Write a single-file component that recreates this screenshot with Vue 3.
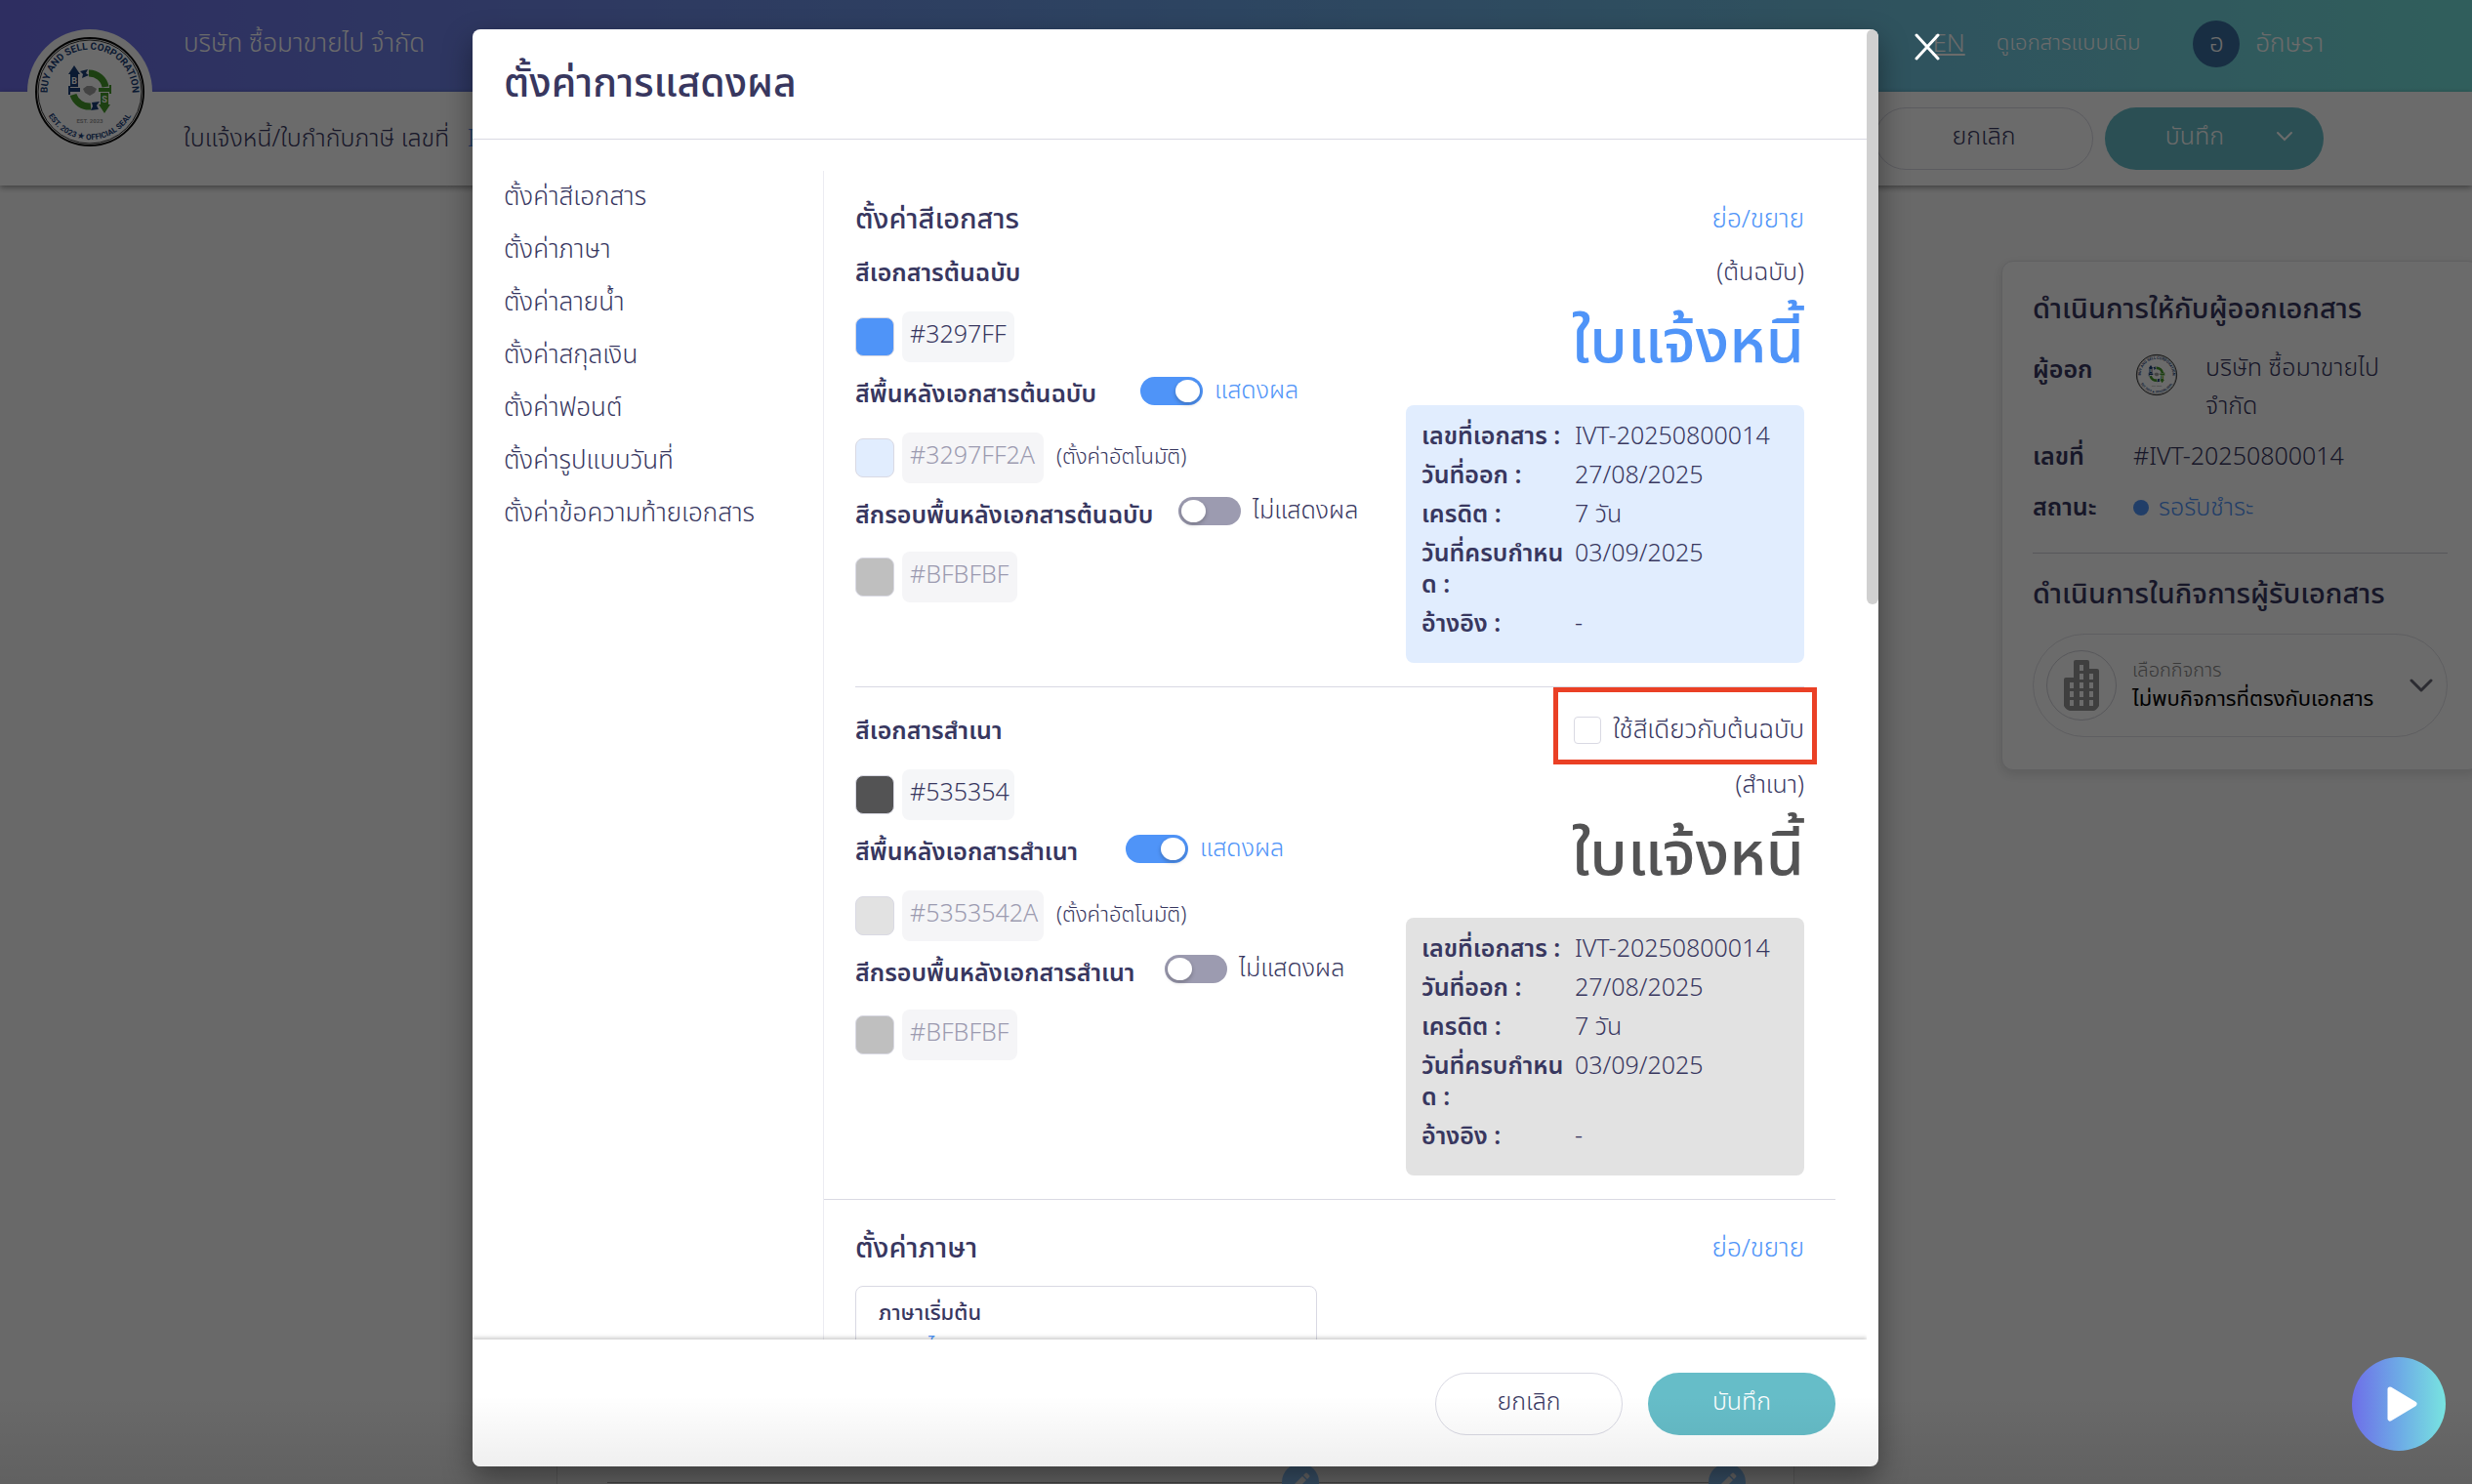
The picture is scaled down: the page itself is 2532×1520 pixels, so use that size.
<script setup>
import { ref } from 'vue'

const menu = [
  'ตั้งค่าสีเอกสาร',
  'ตั้งค่าภาษา',
  'ตั้งค่าลายน้ำ',
  'ตั้งค่าสกุลเงิน',
  'ตั้งค่าฟอนต์',
  'ตั้งค่ารูปแบบวันที่',
  'ตั้งค่าข้อความท้ายเอกสาร',
]

const groups = ref([
  {
    key: 'original',
    tag: '(ต้นฉบับ)',
    title: 'สีเอกสารต้นฉบับ',
    main: '#3297FF',
    ink: '#4f94f8',
    soft: '#e1edfe',
    bgTitle: 'สีพื้นหลังเอกสารต้นฉบับ',
    bg: '#3297FF2A',
    showBg: true,
    frameTitle: 'สีกรอบพื้นหลังเอกสารต้นฉบับ',
    frame: '#BFBFBF',
    showFrame: false,
  },
  {
    key: 'copy',
    tag: '(สำเนา)',
    title: 'สีเอกสารสำเนา',
    main: '#535354',
    ink: '#535354',
    soft: '#e2e2e2',
    bgTitle: 'สีพื้นหลังเอกสารสำเนา',
    bg: '#5353542A',
    showBg: true,
    frameTitle: 'สีกรอบพื้นหลังเอกสารสำเนา',
    frame: '#BFBFBF',
    showFrame: false,
  },
])

const sameColour = ref(false)
</script>

<template>
  <div class="app">
    <svg class="defs" aria-hidden="true">
      <symbol id="seal" viewBox="0 0 128 128">
        <circle cx="64" cy="64" r="64" fill="#fff" />
        <circle cx="64" cy="64" r="55" fill="none" stroke="#0a0a0a" stroke-width="2" />
        <circle cx="64" cy="64" r="53" fill="none" stroke="#333" stroke-width="1" />
        <path id="arcTop" d="M21 70 A43.4 43.4 0 1 1 107 70" fill="none" />
        <path id="arcBottom" d="M15 64 A49 49 0 0 0 113 64" fill="none" />
        <text class="seal-text" font-size="10" text-anchor="middle"><textPath href="#arcTop" startOffset="50%">BUY AND SELL CORPORATION</textPath></text>
        <text class="seal-text" font-size="8" text-anchor="middle"><textPath href="#arcBottom" startOffset="50%">EST. 2023 ★ OFFICIAL SEAL</textPath></text>
        <text class="seal-year" x="64" y="96" font-size="6" text-anchor="middle">EST. 2023</text>
        <path d="M63 45 A17 17 0 0 1 80 59" fill="none" stroke="#459a2c" stroke-width="7" />
        <path d="M47 67 A17 17 0 0 0 65 79" fill="none" stroke="#459a2c" stroke-width="7" />
        <path d="M48 37 L54 46 H52 V59 H44 V46 H42 Z" fill="#1c3f78" />
        <path d="M42 58 H44 V60 H54 V64 H44 V67 H42 Z" fill="#1c3f78" />
        <path d="M79 86 L73 77 H75 V65 H83 V77 H85 Z" fill="#459a2c" />
        <path d="M86 66 H84 V64 H73 V60 H84 V57 H86 Z" fill="#459a2c" />
        <path d="M54 43 L62 41 L60 45 L63 47 L56 50 L57 46 Z M66 75 L74 74 L71 78 L73 82 L65 83 L67 79 Z" fill="#1c3f78" />
        <path d="M57 61 L61 58 L66 58 L71 61 L69 65 L64 68 L59 65 Z" fill="#a0a0a0" />
        <text class="seal-mark" x="48" y="56" font-size="9" text-anchor="middle">B</text>
        <text class="seal-mark" x="79" y="75" font-size="9" text-anchor="middle">S</text>
      </symbol>
    </svg>

    <header class="topbar">
      <span class="company">บริษัท ซื้อมาขายไป จำกัด</span>
      <nav class="toplinks">
        <a href="#" class="lang">EN</a>
        <a href="#" class="classic">ดูเอกสารแบบเดิม</a>
        <span class="avatar">อ</span>
        <span>อักษรา</span>
      </nav>
    </header>
    <svg class="logo"><use href="#seal" /></svg>
    <div class="subbar">
      <span class="doc-title">ใบแจ้งหนี้/ใบกำกับภาษี เลขที่ <a href="#">IVT-20250800014</a></span>
      <div class="sub-actions">
        <button class="btn outline wide" type="button">ยกเลิก</button>
        <button class="btn teal wide split" type="button">
          <span>บันทึก</span>
          <svg width="20" height="12" viewBox="0 0 20 12" fill="none" stroke="currentColor" stroke-width="2" stroke-linecap="round"><path d="M3 2 L10 9 L17 2" /></svg>
        </button>
      </div>
    </div>

    <main class="page">
      <section class="sheet">
        <div class="sheet-row">
          <span v-for="n in 2" :key="n" class="edit">
            <svg width="38" height="38" viewBox="0 0 38 38"><circle cx="19" cy="19" r="19" fill="#8bc5ff" /><path d="M12 26 L13 21 L21 13 L25 17 L17 25 Z M22 12 L24 10 Q25 9 26 10 L28 12 Q29 13 28 14 L26 16 Z" fill="#fff" /></svg>
          </span>
        </div>
      </section>
      <aside class="side">
        <h2>ดำเนินการให้กับผู้ออกเอกสาร</h2>
        <dl>
          <dt>ผู้ออก</dt>
          <dd class="issuer"><svg class="mini"><use href="#seal" /></svg><span>บริษัท ซื้อมาขายไป<br>จำกัด</span></dd>
          <dt>เลขที่</dt>
          <dd>#IVT-20250800014</dd>
          <dt>สถานะ</dt>
          <dd class="status"><i></i>รอรับชำระ</dd>
        </dl>
        <h2 class="second">ดำเนินการในกิจการผู้รับเอกสาร</h2>
        <button class="picker" type="button">
          <span class="round">
            <svg width="38" height="54" viewBox="0 0 38 54"><path d="M11 3 Q11 1 13 1 H25 Q27 1 27 3 V10 H35 Q37 10 37 12 V48 Q34 53 31 53 H7 Q3 52 1 48 V21 Q1 19 3 19 H11 Z" fill="#969696" /><path d="M17 6h4v6h-4z M17 15h4v6h-4z M17 24h4v6h-4z M17 33h4v6h-4z M17 42h4v6h-4z M27 15h4v6h-4z M27 24h4v6h-4z M27 33h4v6h-4z M27 42h4v6h-4z M7 24h4v6H7z M7 33h4v6H7z M7 42h4v6H7z" fill="#fff" /></svg>
          </span>
          <span class="picker-text"><small>เลือกกิจการ</small><b>ไม่พบกิจการที่ตรงกับเอกสาร</b></span>
          <svg width="24" height="14" viewBox="0 0 24 14" fill="none" stroke="#6a6a78" stroke-width="3" stroke-linecap="round" stroke-linejoin="round"><path d="M2 2 L12 12 L22 2" /></svg>
        </button>
      </aside>
    </main>

    <div class="overlay">
      <div class="modal" role="dialog" aria-labelledby="dialogTitle">
        <div class="modal-head"><h1 id="dialogTitle">ตั้งค่าการแสดงผล</h1></div>
        <div class="modal-body">
          <nav class="menu">
            <a v-for="m in menu" :key="m" href="#">{{ m }}</a>
          </nav>
          <div class="content">
            <section class="block">
              <div class="block-head"><h2>ตั้งค่าสีเอกสาร</h2><a href="#">ย่อ/ขยาย</a></div>
              <div v-for="g in groups" :key="g.key" class="group" :class="g.key">
                <div class="left">
                  <div class="row"><label :for="g.key + '-main'">{{ g.title }}</label></div>
                  <div class="picks">
                    <span class="swatch" :style="{ background: g.ink }"></span>
                    <input :id="g.key + '-main'" v-model="g.main" class="hex">
                  </div>
                  <div class="row bg-row">
                    <label :for="g.key + '-bg'">{{ g.bgTitle }}</label>
                    <label class="switch on"><input v-model="g.showBg" type="checkbox"><span>แสดงผล</span></label>
                  </div>
                  <div class="picks">
                    <span class="swatch" :style="{ background: g.soft }"></span>
                    <input :id="g.key + '-bg'" v-model="g.bg" class="hex long" disabled>
                    <span class="auto">(ตั้งค่าอัตโนมัติ)</span>
                  </div>
                  <div class="row frame-row">
                    <label :for="g.key + '-frame'">{{ g.frameTitle }}</label>
                    <label class="switch"><input v-model="g.showFrame" type="checkbox"><span>ไม่แสดงผล</span></label>
                  </div>
                  <div class="picks">
                    <span class="swatch" :style="{ background: g.frame }"></span>
                    <input :id="g.key + '-frame'" v-model="g.frame" class="hex mid" disabled>
                  </div>
                </div>
                <div class="right">
                  <label v-if="g.key === 'copy'" class="same"><input v-model="sameColour" type="checkbox">ใช้สีเดียวกับต้นฉบับ</label>
                  <p class="tag">{{ g.tag }}</p>
                  <p class="big" :style="{ color: g.ink }">ใบแจ้งหนี้</p>
                  <dl class="card" :style="{ background: g.soft }">
                    <dt>เลขที่เอกสาร :</dt><dd>IVT-20250800014</dd>
                    <dt>วันที่ออก :</dt><dd>27/08/2025</dd>
                    <dt>เครดิต :</dt><dd>7 วัน</dd>
                    <dt>วันที่ครบกำหน<br>ด :</dt><dd>03/09/2025</dd>
                    <dt>อ้างอิง :</dt><dd>-</dd>
                  </dl>
                </div>
              </div>
            </section>
            <section class="block">
              <div class="block-head"><h2>ตั้งค่าภาษา</h2><a href="#">ย่อ/ขยาย</a></div>
              <div class="lang-card"><strong>ภาษาเริ่มต้น</strong><span>ภาษาไทย</span></div>
            </section>
          </div>
        </div>
        <div class="modal-foot">
          <button class="btn outline" type="button">ยกเลิก</button>
          <button class="btn teal" type="button">บันทึก</button>
        </div>
        <span class="thumb"></span>
      </div>
      <button class="close" type="button" aria-label="ปิด">
        <svg width="28" height="28" viewBox="0 0 28 28" stroke="#fff" stroke-width="3" stroke-linecap="round"><path d="M3 2 L25 26 M25 2 L3 26" /></svg>
      </button>
    </div>
    <div class="shade"></div>
    <button class="play" type="button" aria-label="เล่น">
      <svg width="34" height="38" viewBox="0 0 34 38"><path d="M5 4 L30 19 L5 34 Z" fill="#fff" stroke="#fff" stroke-width="5" stroke-linejoin="round" /></svg>
    </button>
  </div>
</template>

<style>
body { margin: 0; }
</style>

<style scoped>
.app {
  position: relative;
  height: 100vh;
  overflow: hidden;
  display: flex;
  flex-direction: column;
  background: #fafafa;
  color: #38375f;
  font-family: "Noto Sans Thai", "Noto Sans", "Open Sans", sans-serif;
  font-size: 25px;
  font-weight: 300;
  line-height: 48px;
}
.app *, .app *::before, .app *::after { box-sizing: border-box; }
h1, h2, p, dl, dd { margin: 0; }
a { color: inherit; text-decoration: none; }
button, input { font: inherit; color: inherit; }
dt, label, strong { font-weight: 600; }
.defs { position: absolute; width: 0; height: 0; }
.seal-text, .seal-mark, .seal-year { font-family: "Roboto", sans-serif; font-weight: 700; }
.seal-text { fill: #1c3f78; }
.seal-mark { fill: #fff; }
.seal-year { fill: #999; }

.topbar {
  display: flex;
  align-items: center;
  flex-shrink: 0;
  height: 94px;
  padding: 0 152px 4px 188px;
  background: linear-gradient(90deg, #6f6ee8, #6da5e6 50%, #74e1db);
  color: #fff;
  font-size: 26px;
}
.toplinks { display: flex; align-items: center; margin-left: auto; }
.lang { text-decoration: underline; margin-right: 32px; }
.classic { font-size: 22px; margin-right: 54px; }
.avatar { width: 48px; border-radius: 50%; background: #3a6f9f; text-align: center; margin-right: 16px; }
.logo { position: absolute; left: 28px; top: 30px; width: 128px; height: 128px; }
.subbar {
  display: flex;
  align-items: center;
  flex-shrink: 0;
  height: 96px;
  padding: 0 152px 0 188px;
  background: #fff;
  box-shadow: 0 2px 6px rgba(0, 0, 0, .4);
}
.doc-title a { color: #4f94f8; margin-left: 12px; }
.sub-actions { display: flex; gap: 12px; margin-left: auto; }
.btn { width: 192px; height: 64px; padding: 0 0 4px; border: 0; border-radius: 32px; background: #fff; }
.wide { width: 224px; }
.outline { border: 1px solid #d9d9e3; background: transparent; }
.teal { background: #66bdc8; color: #fff; }
.split { display: flex; align-items: center; justify-content: flex-end; gap: 52px; padding-right: 30px; }

.page { display: flex; gap: 212px; flex: 1; padding: 77px 0 0 570px; margin-right: -8px; }
.sheet { flex: 1; display: flex; align-items: flex-end; padding: 0 51px; border: 1px solid #ddd; height: calc(100vh - 249px); background: #fff; }
.sheet-row { flex: 1; display: flex; justify-content: flex-end; gap: 399px; margin-right: -2px; background: linear-gradient(#aaa, #aaa) center / 100% 1px no-repeat; }
.edit { display: flex; }
.side { width: 490px; height: 522px; padding: 27px 32px 27px 31px; border: 1px solid #e4e4e8; border-radius: 12px; background: #fff; box-shadow: 0 4px 12px rgba(0, 0, 0, .12); }
.side h2 { font-size: 29px; font-weight: 500; line-height: 44px; white-space: nowrap; }
.side dl { display: grid; grid-template-columns: 103px 1fr; row-gap: 4px; padding: 16px 0 22px; border-bottom: 1px solid #d0d0d8; }
.issuer { display: flex; gap: 26px; line-height: 39px; padding: 3px 0 4px; white-space: nowrap; }
.mini { flex-shrink: 0; width: 48px; height: 48px; margin-top: 2px; }
.status { display: flex; align-items: center; color: #4f94f8; }
.status i { width: 16px; height: 16px; margin-right: 10px; border-radius: 50%; background: #4f94f8; }
.side .second { margin-top: 20px; }
.picker { display: flex; align-items: center; width: 100%; height: 106px; margin-top: 18px; padding: 0 14px 0 13px; border: 1px solid #e0e0e6; border-radius: 53px; background: none; text-align: left; }
.round { display: grid; place-items: center; width: 72px; height: 72px; border: 1px solid #d0d0d8; border-radius: 50%; margin-right: 16px; }
.picker-text { flex: 1; display: flex; flex-direction: column; line-height: 30px; white-space: nowrap; }
.picker-text small { font-size: 20px; color: #888; }
.picker-text b { font-size: 22px; font-weight: 400; color: #000; }

.overlay {
  position: absolute;
  inset: 0;
  display: grid;
  grid-template-columns: 484fr 1440fr 608fr;
  padding: 30px 0 18px;
  background: rgba(0, 0, 0, .58);
}
.modal {
  position: relative;
  grid-column: 2;
  display: flex;
  flex-direction: column;
  min-height: 0;
  overflow: hidden;
  border-radius: 8px;
  background: #fff;
  box-shadow: 0 12px 30px rgba(0, 0, 0, .4);
}
.modal-head { margin-right: 12px; padding: 0 32px; border-bottom: 1px solid #d9d9e3; }
.modal-head h1 { font-size: 41px; font-weight: 500; line-height: 112px; }
.modal-body { flex: 1; min-height: 0; display: flex; overflow: hidden; padding-right: 44px; }
.menu { display: flex; flex-direction: column; width: 359px; padding: 32px 0 0 32px; font-size: 26px; line-height: 54px; }
.content { flex: 1; margin-top: 32px; border-left: 1px solid #ececf2; }
.block { padding: 20px 32px 0; border-bottom: 1px solid #d9d9e3; }
.block-head { display: flex; justify-content: space-between; line-height: 60px; }
.block-head h2 { font-size: 29px; font-weight: 500; }
.block-head a { color: #4f94f8; font-size: 26px; }
.group { display: flex; justify-content: space-between; padding-bottom: 24px; }
.copy { padding-top: 20px; border-top: 1px solid #d9d9e3; }
.row { display: flex; height: 48px; line-height: 51px; white-space: nowrap; }
.frame-row { height: 46px; }
.picks { display: flex; align-items: center; gap: 8px; height: 52px; margin: 16px 0 8px; }
.swatch { width: 40px; height: 40px; border: 1px solid #d9d9e3; border-radius: 8px; }
.hex { width: 115px; height: 52px; padding: 0 0 4px 8px; border: 0; border-radius: 8px; background: #f5f6f8; }
.hex:disabled { color: #9c9bb0; background: #f5f5f7; }
.long { width: 145px; }
.mid { width: 118px; }
.auto { margin-left: 5px; font-size: 22px; }
.bg-row > label:first-child { width: 292px; }
.frame-row > label:first-child { width: 331px; }
.copy .bg-row > label:first-child { width: 277px; }
.copy .frame-row > label:first-child { width: 317px; }
.switch { display: flex; align-items: center; gap: 12px; padding-bottom: 6px; font-weight: 300; }
.switch.on { color: #4f94f8; }
.switch input { appearance: none; display: flex; width: 64px; height: 29px; margin: 0; padding: 3px; border-radius: 15px; background: #9c9bb0; }
.switch input::before { content: ""; width: 25px; height: 23px; border-radius: 50%; background: #fff; box-shadow: 0 2px 4px rgba(0, 0, 0, .25); }
.switch input:checked { justify-content: flex-end; background: #4f94f8; }
.right { width: 408px; text-align: right; white-space: nowrap; }
.same { position: relative; display: flex; align-items: center; justify-content: flex-end; gap: 12px; height: 48px; margin-bottom: 8px; font-size: 26px; font-weight: 300; }
.same::after { content: ""; position: absolute; width: 270px; top: -20px; right: -13px; bottom: -11px; border: 5px solid #ea4025; }
.same input { appearance: none; width: 28px; height: 28px; margin: 0; border: 1px solid #d9d9e3; border-radius: 4px; background: #fff; }
.big { font-size: 63px; font-weight: 500; line-height: 98px; margin-bottom: 14px; }
.card { display: grid; grid-template-columns: 157px 1fr; padding: 12px 16px 20px; border-radius: 8px; text-align: left; line-height: 32px; }
.card dt, .card dd { padding: 4px 0; }
.lang-card { display: flex; flex-direction: column; width: 473px; height: 120px; margin-top: 8px; padding: 12px 23px; border: 1px solid #d9d9e3; border-radius: 8px; line-height: 32px; }
.lang-card strong { font-size: 22px; font-weight: 500; }
.lang-card span { margin-top: 3px; color: #4f94f8; }
.modal-foot { position: relative; display: flex; justify-content: flex-end; gap: 26px; height: 130px; margin-right: 12px; padding: 34px 32px 0; background: #fff; box-shadow: 0 -2px 4px rgba(0, 0, 0, .2); clip-path: inset(-8px 0 0 0); }
.thumb { position: absolute; right: 0; top: 0; width: 12px; height: 40%; border-radius: 6px; background: #d0d0d0; }
.close { align-self: start; justify-self: start; display: flex; margin: 4px 0 0 36px; padding: 0; border: 0; background: none; }
.shade { position: absolute; left: 0; right: 0; bottom: 0; height: 90px; background: linear-gradient(transparent, rgba(0, 0, 0, .08)); pointer-events: none; }
.play { position: absolute; right: 27px; bottom: 34px; display: grid; place-items: center; width: 96px; height: 96px; padding: 0 0 0 6px; border: 0; border-radius: 50%; background: linear-gradient(90deg, #6e6ee8, #6daae6 50%, #78e4e0); }
</style>
